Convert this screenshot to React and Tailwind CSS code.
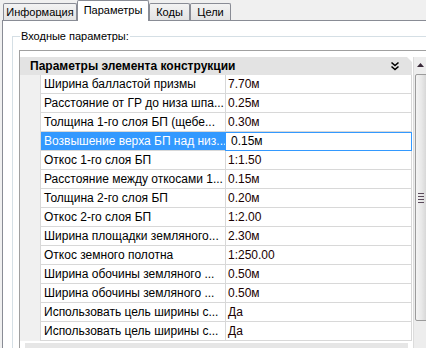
import React from "react";

const rows = [
  ["Ширина балластой призмы", "7.70м"],
  ["Расстояние от ГР до низа шпа...", "0.25м"],
  ["Толщина 1-го слоя БП (щебе...", "0.30м"],
  ["Возвышение верха БП над низ...", "0.15м"],
  ["Откос 1-го слоя БП", "1:1.50"],
  ["Расстояние между откосами 1...", "0.15м"],
  ["Толщина 2-го слоя БП", "0.20м"],
  ["Откос 2-го слоя БП", "1:2.00"],
  ["Ширина площадки земляного...", "2.30м"],
  ["Откос земного полотна", "1:250.00"],
  ["Ширина обочины земляного ...", "0.50м"],
  ["Ширина обочины земляного ...", "0.50м"],
  ["Использовать цель ширины с...", "Да"],
  ["Использовать цель ширины с...", "Да"],
];

const SELECTED = 3;

function Tab({ label, active, width }) {
  if (active) {
    return (
      <div className="relative z-10 h-[21px] -mb-px w-[72px] pt-[2px] border border-b-0 border-[#898c95] rounded-t-[2px] bg-white text-[11px] leading-[15px] text-center">
        {label}
      </div>
    );
  }
  return (
    <div
      className={
        width === "wide"
          ? "h-[17px] w-[74px] pt-[1px] border border-b-0 border-[#898c95] rounded-t-[2px] bg-gradient-to-b from-[#f3f3f3] to-[#e3e3e3] text-[11px] leading-[15px] text-center"
          : "h-[17px] w-[41px] pt-[1px] border border-b-0 border-[#898c95] rounded-t-[2px] bg-gradient-to-b from-[#f3f3f3] to-[#e3e3e3] text-[11px] leading-[15px] text-center"
      }
    >
      {label}
    </div>
  );
}

function Chevrons() {
  return (
    <svg width="10" height="10" viewBox="0 0 10 10" fill="none" stroke="#000" strokeWidth="1.6">
      <path d="M1.5 1.5 L5 4.5 L8.5 1.5" />
      <path d="M1.5 5.5 L5 8.5 L8.5 5.5" />
    </svg>
  );
}

function Row({ label, value, selected }) {
  return (
    <div className="flex h-[19px] text-[12px] leading-[18px]">
      <div className="w-[20px] bg-[#f0f0f0]" />
      <div
        className={
          selected
            ? "w-[185px] border-l border-b border-[#d8d8d8] bg-[#3399ff] text-white pl-[3px] whitespace-nowrap overflow-hidden"
            : "w-[185px] border-l border-b border-[#d8d8d8] pl-[3px] whitespace-nowrap overflow-hidden"
        }
      >
        {label}
      </div>
      {selected ? (
        <div className="w-[187px] border border-[#3399ff] pl-[5px] leading-[17px] bg-white">{value}</div>
      ) : (
        <div className="w-[187px] border-l border-r border-b border-[#d8d8d8] pl-[2px] text-[#1a0000]">{value}</div>
      )}
    </div>
  );
}

function Scrollbar() {
  return (
    <div className="w-[14px] ml-[1px] border-l border-[#dcdcdc] bg-[#ededed] flex flex-col items-center">
      <div className="h-[14px] w-full flex items-center justify-center pt-[2px]">
        <svg width="7" height="4" viewBox="0 0 7 4">
          <path d="M0 4 L3.5 0 L7 4 Z" fill="#3a2a3a" />
        </svg>
      </div>
      <div className="mt-[3px] h-[247px] w-[13px] ml-[1px] rounded-[2px] border border-[#9b9b9b] bg-gradient-to-r from-[#f4f4f4] via-[#e8e8e8] to-[#d4d4d4] flex items-center justify-center">
        <div className="flex flex-col gap-[2px]">
          <div className="w-[6px] h-px bg-[#5a4a5a]" />
          <div className="w-[6px] h-px bg-[#5a4a5a]" />
          <div className="w-[6px] h-px bg-[#5a4a5a]" />
          <div className="w-[6px] h-px bg-[#5a4a5a]" />
        </div>
      </div>
    </div>
  );
}

export default function App() {
  return (
    <div className="w-[426px] h-[348px] overflow-hidden bg-[#f0f0f0] flex flex-col font-['Liberation_Sans',Arial,sans-serif] text-black">
      <div className="h-[20px] flex items-end pl-[3px] shrink-0">
        <Tab label="Информация" width="wide" />
        <Tab label="Параметры" active />
        <Tab label="Коды" />
        <Tab label="Цели" />
      </div>

      <div className="flex-1 ml-[2px] border-t border-l border-[#898c95] bg-white pt-[15px] pl-[9px]">
        {/* group box */}
        <div className="relative border-t border-l border-[#d5dfe5] pt-[13px] pl-[6px] h-full">
          <div className="absolute -top-[8px] left-[7px] bg-white px-[1px] text-[11px] leading-[14px]">
            Входные параметры:
          </div>

          <div className="border-t border-l border-[#a0a0a0] pt-[6px] flex w-[420px]">
            <div className="w-[392px]">
              <div className="h-[18px] bg-[#e3e3e3] flex items-center justify-between pl-[10px] pr-[12px] [clip-path:polygon(0_0,calc(100%-5px)_0,100%_5px,100%_100%,0_100%)]">
                <span className="font-bold text-[12px] leading-[16px]">Параметры элемента конструкции</span>
                <Chevrons />
              </div>
              {rows.map(([label, value], i) => (
                <Row key={i} label={label} value={value} selected={i === SELECTED} />
              ))}
              <div className="mt-[2px] ml-[5px] mr-[4px] h-[8px] bg-[#e6e6e6]" />
            </div>
            <Scrollbar />
          </div>
        </div>
      </div>
    </div>
  );
}
